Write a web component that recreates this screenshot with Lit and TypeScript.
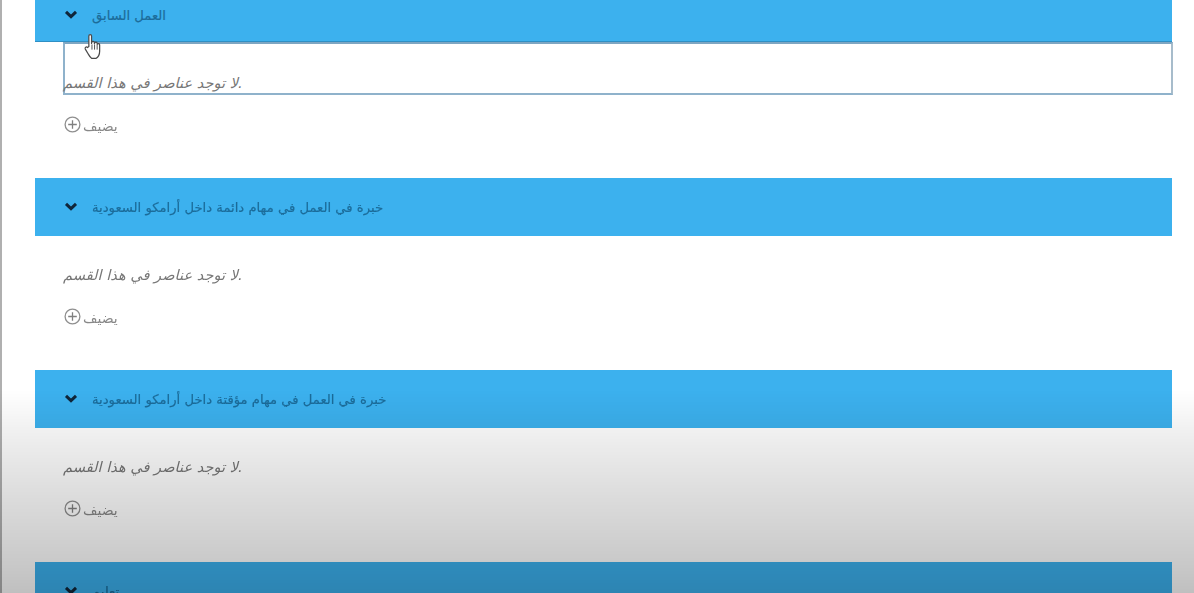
import { LitElement, html, css, svg, nothing } from "lit";
import { customElement } from "lit/decorators.js";

const SECTIONS = [
  { title: "العمل السابق", focus: true, body: true },
  { title: "خبرة في العمل في مهام دائمة داخل أرامكو السعودية", focus: false, body: true },
  { title: "خبرة في العمل في مهام مؤقتة داخل أرامكو السعودية", focus: false, body: true },
  { title: "تعليم", focus: false, body: false },
];

const chevron = svg`<svg class="chev" width="14" height="9" viewBox="0 0 14 9"><path d="M2 1.800 7 6.600l5-4.800" fill="none" stroke="#10263a" stroke-width="3"/></svg>`;
const plus = svg`<svg class="plus" width="17" height="17" viewBox="0 0 17 17"><circle cx="8.500" cy="8.500" r="7.400" fill="none" stroke="#8f8f8f" stroke-width="1.300"/><path d="M8.500 4.200v8.600M4.200 8.500h8.600" stroke="#808080" stroke-width="1.300"/></svg>`;
const hand = svg`<svg class="hand" width="20" height="27" viewBox="0 0 18 26"><path d="M5 13V3c0-2 2.600-2 2.600 0v7l.2-1c.4-1.400 2.400-1.200 2.500.2l.1 1 .2-.6c.5-1.200 2.300-1 2.400.3l.1 1 .3-.3c.7-.8 2-.3 2 .9v6c0 3.500-1.800 6-3.600 7H7.800c-1.500-.8-2.300-2.300-3.400-4.300L1.600 15.500c-.8-1.600 1-2.700 2.100-1.500z" fill="#fff" stroke="#4a4a4a" stroke-width="1.200" stroke-linejoin="round"/><path d="M8 11v5M10.500 11v5M13 11.500V16" stroke="#4a4a4a" stroke-width=".9"/></svg>`;

@customElement("app-root")
export class AppRoot extends LitElement {
  static styles = css`
    :host {
      display: block;
      position: relative;
      width: 1194px;
      height: 593px;
      overflow: hidden;
      background: #fff;
      font-family: "DejaVu Sans", "Noto Sans", sans-serif;
    }
    .page {
      box-sizing: border-box;
      height: 593px;
      margin-top: -14px;
      padding-left: 35px;
      padding-right: 22px;
      filter: blur(0.5px);
    }
    .rail {
      position: absolute;
      left: 0;
      top: 0;
      bottom: 0;
      width: 2px;
      background: #b0b0b0;
    }
    .section {
      height: 192px;
    }
    .bar {
      box-sizing: border-box;
      height: 58px;
      background: #3cb1ee;
      display: flex;
      align-items: flex-start;
      gap: 14px;
      padding: 24px 0 0 29px;
    }
    .bar.active {
      height: 56px;
      border-bottom: 1px solid #2f8fc4;
    }
    .chev {
      flex: none;
    }
    .title {
      margin-top: -2px;
      font-size: 13.2px;
      line-height: 16px;
      color: #1c6c9a;
      white-space: nowrap;
      -webkit-text-stroke: 0.2px #1c6c9a;
    }
    .body {
      margin-left: 28px;
      height: 53px;
      padding-top: 29px;
      box-sizing: border-box;
    }
    .body.focus {
      margin-right: -1px;
      border: 2px solid #a7bccb;
      border-top-color: #7ea6c2;
      border-left-color: #8fb2cb;
      border-bottom-color: #8fb2cb;
      padding-top: 29px;
      background: #fff;
    }
    .msg {
      font-size: 14.6px;
      line-height: 20px;
      font-style: italic;
      color: #777;
      direction: ltr;
      white-space: nowrap;
    }
    .focus .msg {
      margin-left: -2px;
    }
    .add {
      margin: 19px 0 0 29px;
      display: flex;
      align-items: flex-start;
      gap: 2px;
      font-size: 14px;
      line-height: 20px;
      color: #888;
    }
    .add.first {
      margin-top: 21px;
    }
    .plus {
      flex: none;
    }
    .hand {
      position: absolute;
      left: 83px;
      top: 33px;
    }
    .shade {
      position: absolute;
      inset: 0;
      pointer-events: none;
      background: linear-gradient(to bottom, rgba(0,0,0,0) 0, rgba(0,0,0,0) 390px, rgba(0,0,0,0.07) 440px, rgba(0,0,0,0.14) 500px, rgba(0,0,0,0.22) 570px, rgba(0,0,0,0.25) 593px);
    }
  `;

  render() {
    return html`
      <div class="page">
        ${SECTIONS.map(
          (s) => html`
            <section class="section">
              <div class="bar ${s.focus ? "active" : ""}">
                ${chevron}
                <span class="title" dir="rtl">${s.title}</span>
              </div>
              ${s.body
                ? html`
                    <div class="body ${s.focus ? "focus" : ""}">
                      <div class="msg">لا توجد عناصر في هذا القسم.</div>
                    </div>
                    <div class="add ${s.focus ? "first" : ""}">${plus}<span dir="rtl">يضيف</span></div>
                  `
                : nothing}
            </section>
          `
        )}
      </div>
      <div class="rail"></div>
      ${hand}
      <div class="shade"></div>
    `;
  }
}
